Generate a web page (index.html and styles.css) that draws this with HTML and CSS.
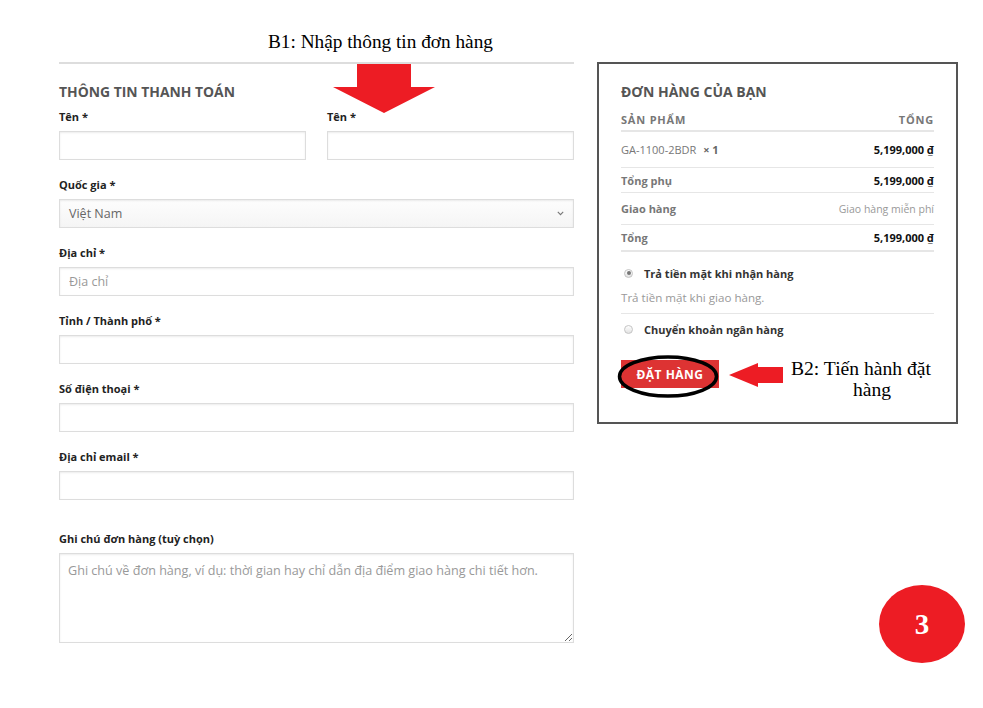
FILE: index.html
```html
<!DOCTYPE html>
<html lang="vi">
<head>
<meta charset="utf-8">
<title>Thanh toán</title>
<link rel="stylesheet" href="styles.css">
</head>
<body>
<div class="page">
  <section class="billing">
    <div class="step-title">B1: Nhập thông tin đơn hàng</div>
    <div class="rule"></div>
    <h3 class="section-title">THÔNG TIN THANH TOÁN</h3>
    <div class="fields">
      <div class="row-2">
        <div class="field"><label>Tên *</label><input class="input" type="text"></div>
        <div class="field"><label>Tên *</label><input class="input" type="text"></div>
      </div>
      <div class="field"><label>Quốc gia *</label>
        <div class="input select"><span>Việt Nam</span>
          <svg class="chev" width="7" height="5" viewBox="0 0 7 5"><path d="M0.8 0.8 L3.5 3.6 L6.2 0.8" fill="none" stroke="#777" stroke-width="1.1"/></svg>
        </div>
      </div>
      <div class="field"><label>Địa chỉ *</label><input class="input" type="text" placeholder="Địa chỉ"></div>
      <div class="field"><label>Tỉnh / Thành phố *</label><input class="input" type="text"></div>
      <div class="field"><label>Số điện thoại *</label><input class="input" type="text"></div>
      <div class="field"><label>Địa chỉ email *</label><input class="input" type="text"></div>
      <div class="field notes"><label>Ghi chú đơn hàng (tuỳ chọn)</label><textarea class="input area" placeholder="Ghi chú về đơn hàng, ví dụ: thời gian hay chỉ dẫn địa điểm giao hàng chi tiết hơn."></textarea></div>
    </div>
  </section>

  <section class="order">
    <h3 class="section-title">ĐƠN HÀNG CỦA BẠN</h3>
    <div class="order-head"><span>SẢN PHẨM</span><span>TỔNG</span></div>
    <div class="order-row row-item"><span class="prod">GA-1100-2BDR <b class="qty">× 1</b></span><span class="amt">5,199,000 ₫</span></div>
    <div class="order-row row-sub"><span class="key">Tổng phụ</span><span class="amt">5,199,000 ₫</span></div>
    <div class="order-row row-ship"><span class="key">Giao hàng</span><span class="free">Giao hàng miễn phí</span></div>
    <div class="order-row row-total"><span class="key">Tổng</span><span class="amt">5,199,000 ₫</span></div>
    <div class="payments">
      <div class="pay"><span class="radio checked"></span>Trả tiền mặt khi nhận hàng</div>
      <div class="pay-desc">Trả tiền mặt khi giao hàng.</div>
      <div class="pay pay-2"><span class="radio"></span>Chuyển khoản ngân hàng</div>
    </div>
    <button class="place">ĐẶT HÀNG</button>
  </section>

  <svg class="arrow-down" width="102" height="49" viewBox="0 0 102 49"><polygon points="24,0 78,0 78,23 102,23 51,49 0,23 24,23" fill="#ed1c24"/></svg>
  <svg class="arrow-left" width="54" height="24" viewBox="0 0 54 24"><polygon points="0,12 29,0 29,4 54,4 54,20 29,20 29,24" fill="#ed1c24"/></svg>
  <svg class="ring" width="102" height="43" viewBox="0 0 102 43"><ellipse cx="51" cy="21.5" rx="48.5" ry="19.5" fill="none" stroke="#000" stroke-width="3.5"/></svg>
  <div class="b2"><span>B2: Tiến hành đặt</span><span class="b2-2">hàng</span></div>
  <div class="badge">3</div>
</div>
</body>
</html>
```

FILE: styles.css
```css
html, body {
  margin: 0;
  padding: 0;
  background: #fff;
}
body {
  font-family: "Open Sans", "Noto Sans", sans-serif;
  color: #222;
}
.page {
  position: relative;
  display: flex;
  align-items: flex-start;
  gap: 23px;
  padding-left: 59px;
  width: 983px;
  height: 708px;
  box-sizing: border-box;
  overflow: hidden;
}

/* left column */
.billing {
  width: 515px;
  flex: none;
}
.step-title {
  font-family: "Liberation Serif", serif;
  font-size: 19.3px;
  line-height: 21px;
  padding-top: 31px;
  margin-left: 209px;
  margin-bottom: 10px;
  color: #000;
}
.rule {
  height: 2px;
  background: #ddd;
}
.section-title {
  margin: 18px 0 0;
  font-size: 13.9px;
  line-height: 20px;
  font-weight: 700;
  color: #555;
}
.fields {
  display: flex;
  flex-direction: column;
  gap: 16px;
  margin-top: 6px;
}
.row-2 {
  display: flex;
  gap: 21px;
}
.row-2 .field {
  flex: 1;
}
.field label {
  display: block;
  font-size: 11px;
  line-height: 18px;
  font-weight: 700;
  color: #222;
  margin-bottom: 5px;
}
.input {
  display: block;
  width: 100%;
  height: 29px;
  box-sizing: border-box;
  margin: 0;
  border: 1px solid #ddd;
  box-shadow: inset 0 1px 2px rgba(0, 0, 0, 0.08);
  padding: 0 9px;
  font-family: "Open Sans", sans-serif;
  font-size: 12.5px;
  color: #333;
  background: #fff;
  outline: none;
}
.input::placeholder {
  color: #999;
}
.select {
  display: flex;
  align-items: center;
  justify-content: space-between;
  background: linear-gradient(#fdfdfd, #f5f5f5);
  color: #666;
}
.notes {
  margin-top: 14px;
}
.area {
  height: 90px;
  padding: 8px 8px;
  font-size: 12.6px;
  line-height: 18px;
}

/* order box */
.order {
  width: 361px;
  flex: none;
  box-sizing: border-box;
  margin-top: 62px;
  border: 2px solid #555;
  padding: 0 22px 34px;
}
.order .section-title {
  font-size: 14px;
}
.order-head {
  display: flex;
  justify-content: space-between;
  align-items: center;
  height: 24px;
  box-sizing: border-box;
  margin-top: 6px;
  border-bottom: 2px solid #e6e6e6;
  font-size: 11px;
  font-weight: 700;
  color: #777;
  letter-spacing: 0.8px;
}
.order-row {
  display: flex;
  justify-content: space-between;
  align-items: center;
  box-sizing: border-box;
  border-bottom: 1px solid #e6e6e6;
  font-size: 11px;
}
.row-item { height: 36px; }
.row-sub { height: 25px; }
.row-ship { height: 32px; }
.row-total {
  height: 27px;
  border-bottom-width: 2px;
}
.prod {
  color: #777;
}
.qty {
  color: #666;
  margin-left: 4px;
}
.amt {
  font-weight: 700;
  color: #111;
}
.key {
  font-weight: 700;
  color: #777;
}
.free {
  font-size: 10.5px;
  color: #999;
}
.payments {
  margin-top: 12px;
}
.pay {
  display: flex;
  align-items: center;
  height: 18px;
  font-size: 11px;
  font-weight: 700;
  color: #333;
}
.pay-2 {
  margin-top: 6px;
}
.radio {
  position: relative;
  width: 9px;
  height: 9px;
  box-sizing: border-box;
  border-radius: 50%;
  border: 1px solid #c4c4c4;
  background: linear-gradient(#fff, #e2e2e2);
  margin: 0 11px 0 3px;
  flex: none;
}
.radio.checked::after {
  content: "";
  position: absolute;
  left: 1.5px;
  top: 1.5px;
  width: 4px;
  height: 4px;
  border-radius: 50%;
  background: #777;
}
.pay-desc {
  margin-top: 7px;
  line-height: 18px;
  font-size: 11.6px;
  color: #999;
  padding-bottom: 6px;
  border-bottom: 1px solid #e6e6e6;
}
.place {
  display: block;
  margin-top: 22px;
  width: 98px;
  height: 28px;
  padding: 0;
  border: 0;
  background: #dd3333;
  color: #fff;
  font-family: "Open Sans", sans-serif;
  font-size: 12px;
  font-weight: 700;
  letter-spacing: 0.5px;
}

/* annotations */
.arrow-down {
  position: absolute;
  left: 333px;
  top: 64px;
}
.arrow-left {
  position: absolute;
  left: 729px;
  top: 363px;
}
.ring {
  position: absolute;
  left: 617px;
  top: 355px;
}
.b2 {
  position: absolute;
  left: 791px;
  top: 358px;
  font-family: "Liberation Serif", serif;
  font-size: 19.6px;
  line-height: 21px;
  color: #000;
}
.b2 span {
  display: block;
}
.b2-2 {
  margin-left: 62px;
}
.badge {
  position: absolute;
  left: 879px;
  top: 585px;
  width: 86px;
  height: 78px;
  border-radius: 50%;
  background: #ed1c24;
  color: #fff;
  display: flex;
  align-items: center;
  justify-content: center;
  font-family: "Liberation Serif", serif;
  font-weight: 700;
  font-size: 29px;
}
```
